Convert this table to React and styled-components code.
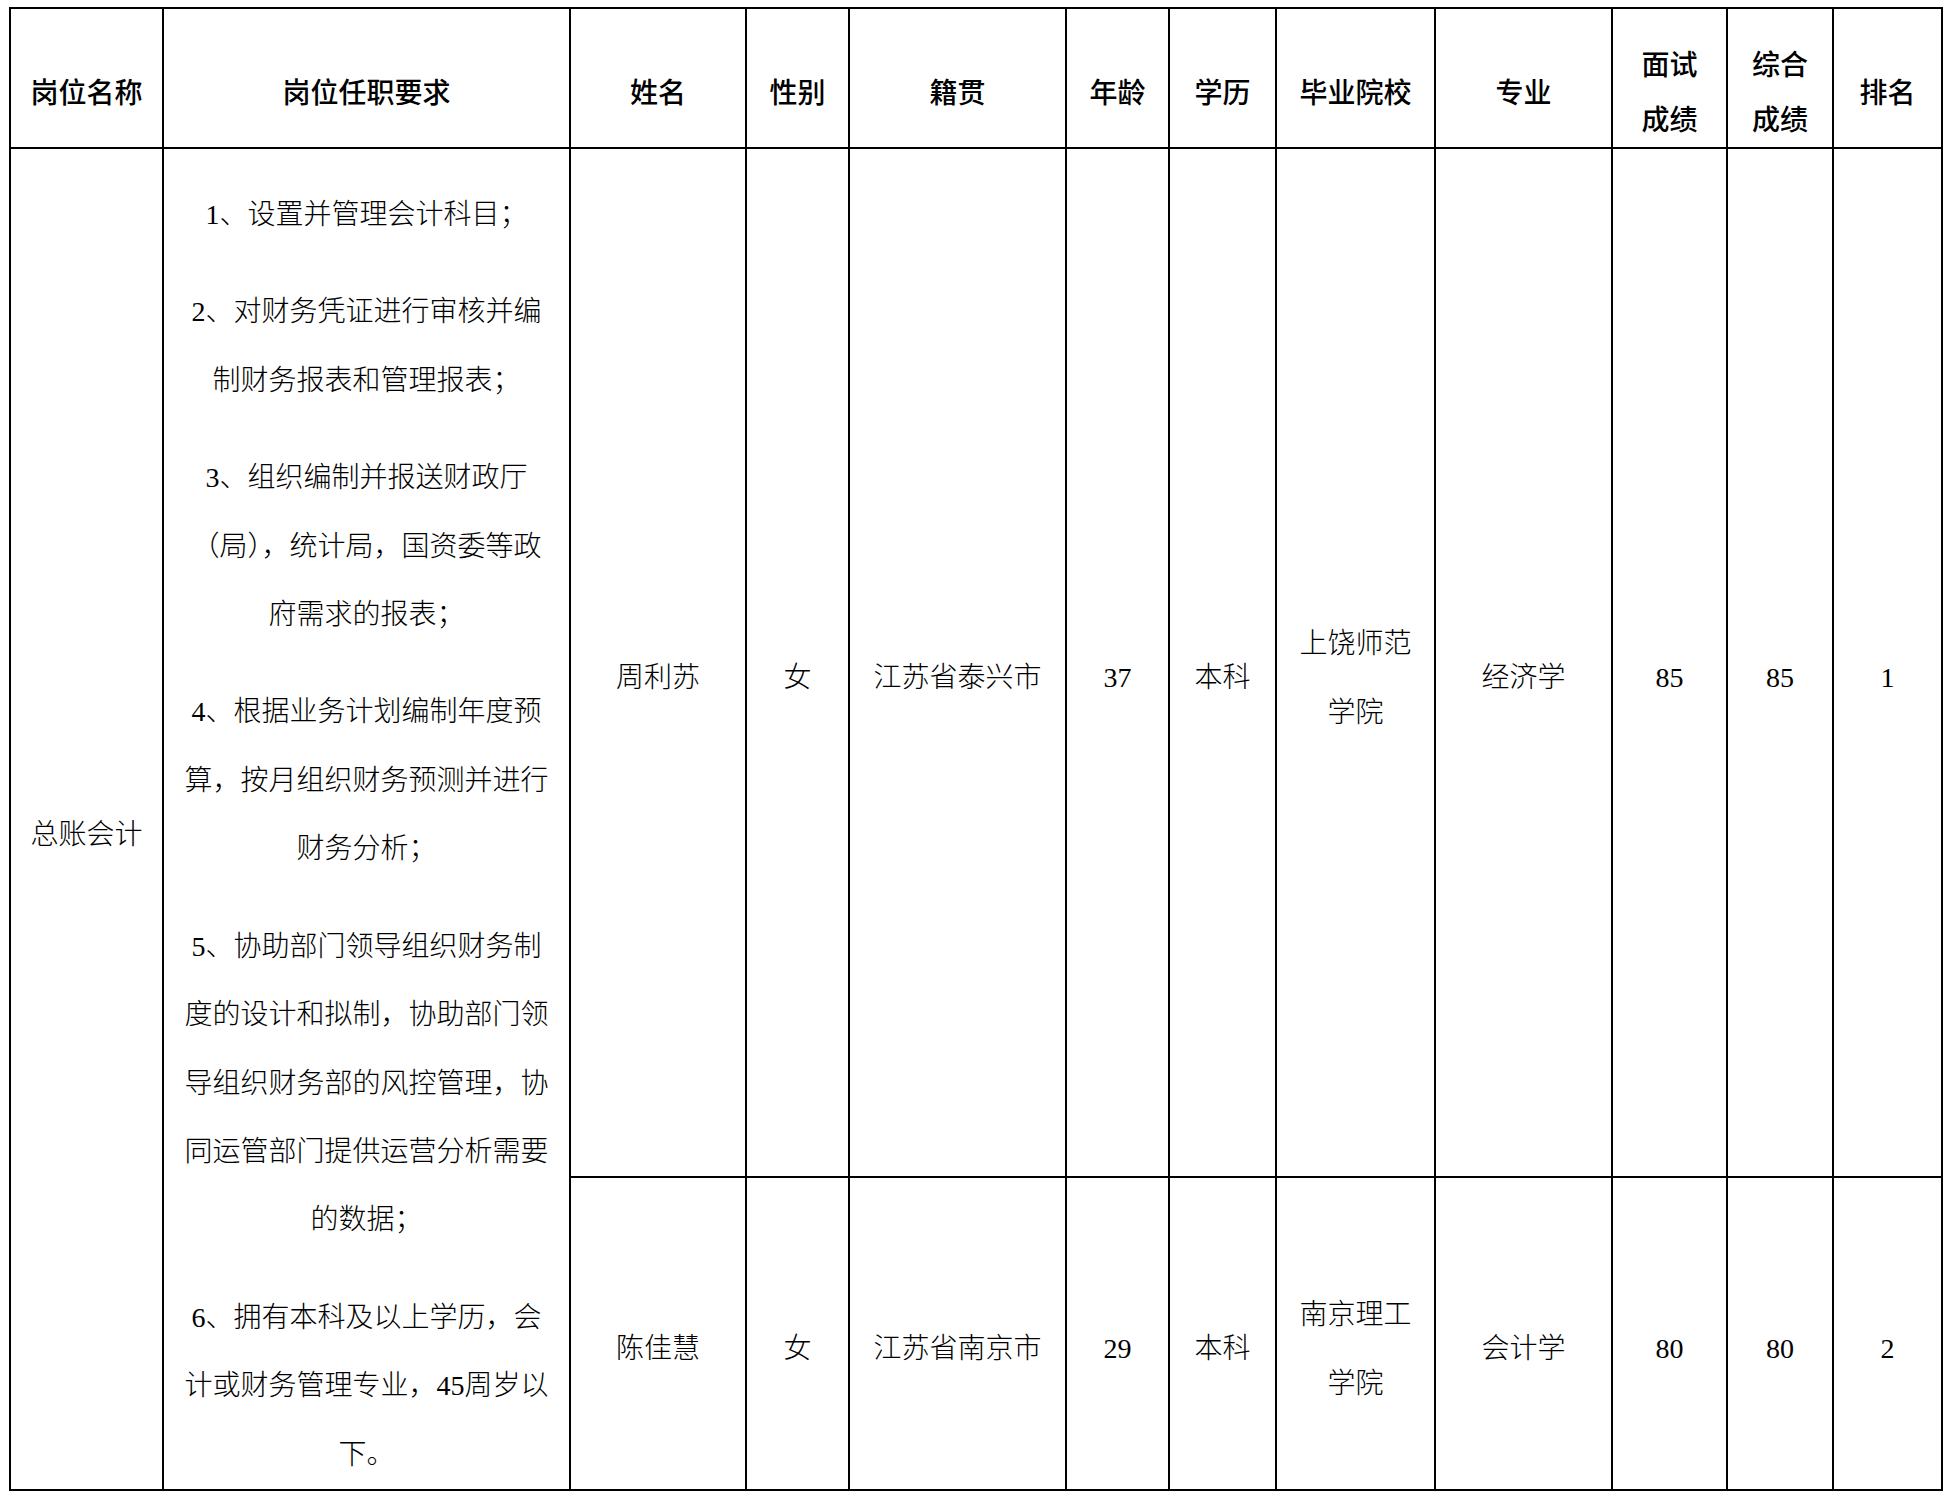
import React from "react";
import styled, { createGlobalStyle } from "styled-components";

const GlobalStyle = createGlobalStyle`
  html, body {
    margin: 0;
    padding: 0;
    background: #ffffff;
  }
  body {
    font-family: "Liberation Serif", "Noto Sans CJK SC", serif;
    color: #000000;
  }
`;

const Page = styled.div`
  padding: 7px 0 0 9px;
`;

const Grid = styled.div`
  display: grid;
  grid-template-columns: 151px 405px 174px 101px 215px 101px 105px 157px 175px 113px 104px 107px;
  grid-template-rows: 138px 1027px 311px;
  gap: 2px;
  padding: 2px;
  background: #000000;
  width: fit-content;
`;

const Cell = styled.div`
  background: #ffffff;
  display: flex;
  flex-direction: column;
  align-items: center;
  justify-content: center;
  text-align: center;
  padding-top: 3px;
  box-sizing: border-box;
  font-size: 28px;
  font-weight: ${(p) => (p.$head ? 500 : 300)};
  grid-row: ${(p) => (p.$span ? "span 2" : "auto")};
  overflow: hidden;
`;

const Para = styled.div`
  padding-top: 29px;
  line-height: ${(p) => (p.$head ? "54.7px" : "68.4px")};
`;

const Line = styled.span`
  display: block;
  white-space: nowrap;
`;

const headers = [
  ["岗位名称"],
  ["岗位任职要求"],
  ["姓名"],
  ["性别"],
  ["籍贯"],
  ["年龄"],
  ["学历"],
  ["毕业院校"],
  ["专业"],
  ["面试", "成绩"],
  ["综合", "成绩"],
  ["排名"],
];

const requirements = [
  ["1、设置并管理会计科目；"],
  ["2、对财务凭证进行审核并编", "制财务报表和管理报表；"],
  ["3、组织编制并报送财政厅", "（局），统计局，国资委等政", "府需求的报表；"],
  ["4、根据业务计划编制年度预", "算，按月组织财务预测并进行", "财务分析；"],
  [
    "5、协助部门领导组织财务制",
    "度的设计和拟制，协助部门领",
    "导组织财务部的风控管理，协",
    "同运管部门提供运营分析需要",
    "的数据；",
  ],
  ["6、拥有本科及以上学历，会", "计或财务管理专业，45周岁以", "下。"],
];

const people = [
  [["周利苏"], ["女"], ["江苏省泰兴市"], ["37"], ["本科"], ["上饶师范", "学院"], ["经济学"], ["85"], ["85"], ["1"]],
  [["陈佳慧"], ["女"], ["江苏省南京市"], ["29"], ["本科"], ["南京理工", "学院"], ["会计学"], ["80"], ["80"], ["2"]],
];

function TextCell({ lines, head, span }) {
  return (
    <Cell $head={head} $span={span}>
      <Para $head={head}>
        {lines.map((l, i) => (
          <Line key={i}>{l}</Line>
        ))}
      </Para>
    </Cell>
  );
}

export default function App() {
  return (
    <Page>
      <GlobalStyle />
      <Grid>
        {headers.map((h, i) => (
          <TextCell key={"h" + i} lines={h} head />
        ))}
        <TextCell lines={["总账会计"]} span />
        <Cell $span>
          {requirements.map((p, i) => (
            <Para key={i}>
              {p.map((l, j) => (
                <Line key={j}>{l}</Line>
              ))}
            </Para>
          ))}
        </Cell>
        {people.map((row, r) =>
          row.map((c, i) => <TextCell key={r + "-" + i} lines={c} />)
        )}
      </Grid>
    </Page>
  );
}
